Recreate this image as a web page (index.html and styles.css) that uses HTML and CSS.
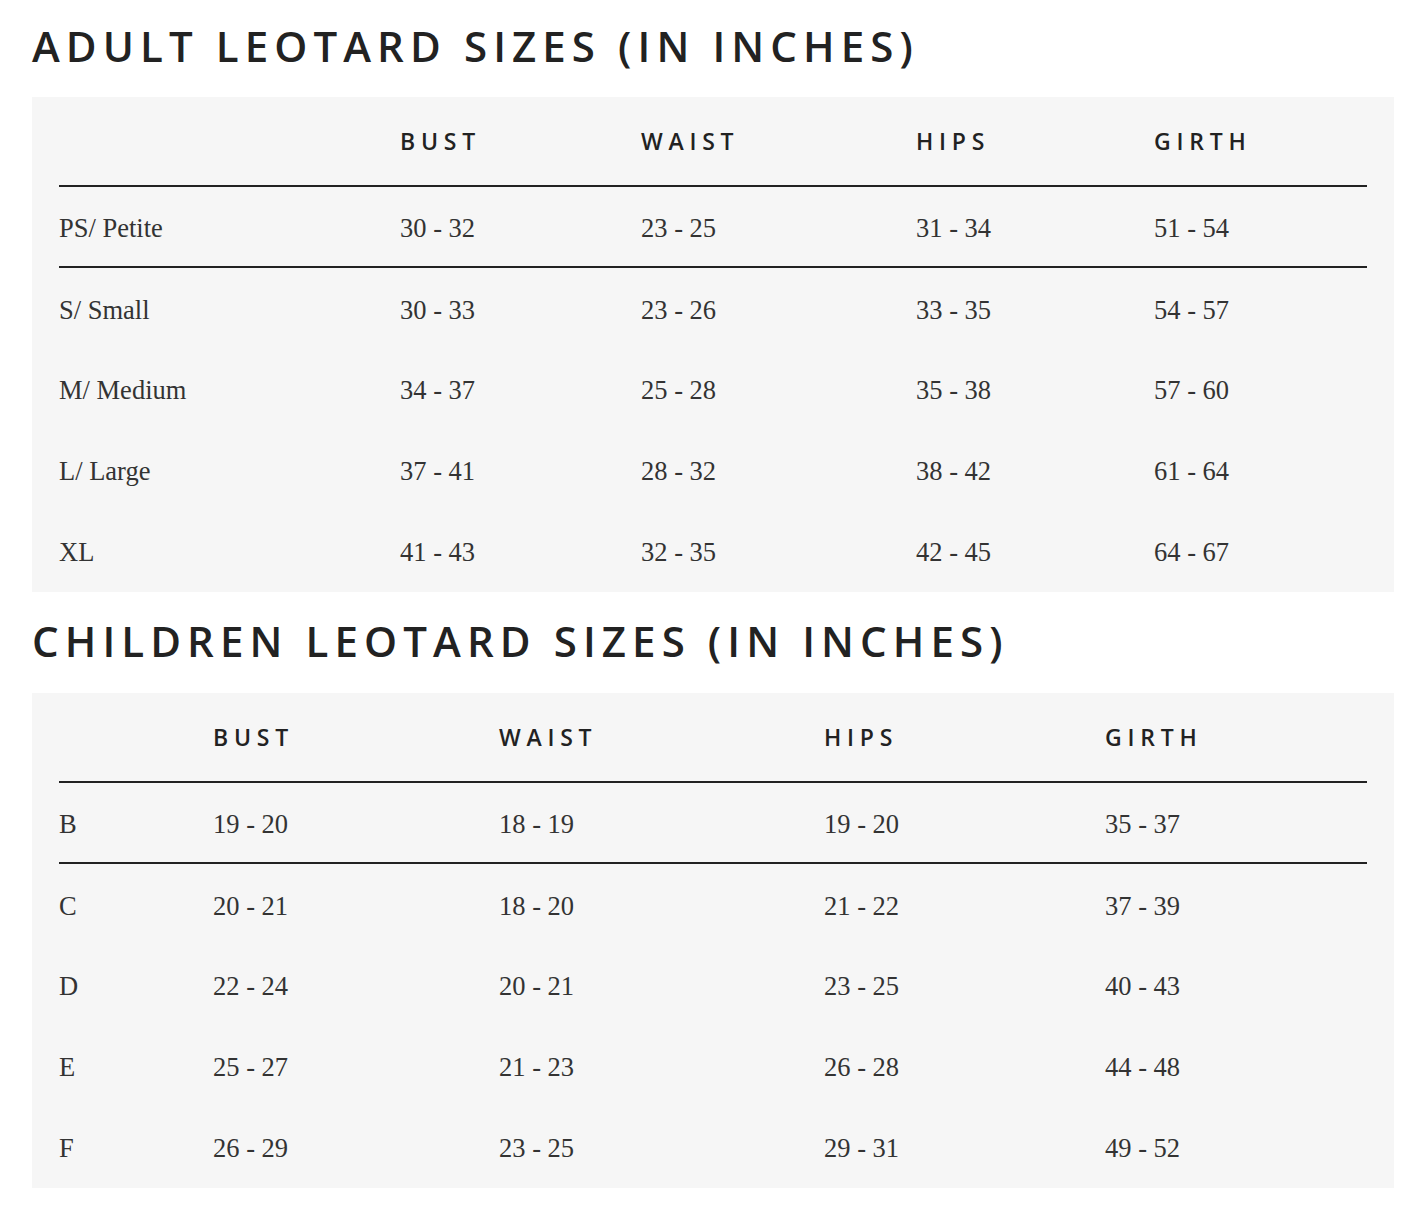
FILE: index.html
```html
<!DOCTYPE html>
<html lang="en">
<head>
<meta charset="utf-8">
<title>Leotard Sizes</title>
<link rel="stylesheet" href="styles.css">
</head>
<body>
<main class="page">
  <section class="chart">
    <h2 class="chart-title">Adult Leotard Sizes (in inches)</h2>
    <div class="chart-box">
      <table class="size-table">
        <colgroup>
          <col class="a-c1"><col class="a-c2"><col class="a-c3"><col class="a-c4"><col class="a-c5">
        </colgroup>
        <thead>
          <tr><th></th><th>Bust</th><th>Waist</th><th>Hips</th><th>Girth</th></tr>
        </thead>
        <tbody>
          <tr class="ruled"><td>PS/ Petite</td><td>30 - 32</td><td>23 - 25</td><td>31 - 34</td><td>51 - 54</td></tr>
          <tr><td>S/ Small</td><td>30 - 33</td><td>23 - 26</td><td>33 - 35</td><td>54 - 57</td></tr>
          <tr><td>M/ Medium</td><td>34 - 37</td><td>25 - 28</td><td>35 - 38</td><td>57 - 60</td></tr>
          <tr><td>L/ Large</td><td>37 - 41</td><td>28 - 32</td><td>38 - 42</td><td>61 - 64</td></tr>
          <tr><td>XL</td><td>41 - 43</td><td>32 - 35</td><td>42 - 45</td><td>64 - 67</td></tr>
        </tbody>
      </table>
    </div>
  </section>
  <section class="chart">
    <h2 class="chart-title">Children Leotard Sizes (in inches)</h2>
    <div class="chart-box">
      <table class="size-table">
        <colgroup>
          <col class="c-c1"><col class="c-c2"><col class="c-c3"><col class="c-c4"><col class="c-c5">
        </colgroup>
        <thead>
          <tr><th></th><th>Bust</th><th>Waist</th><th>Hips</th><th>Girth</th></tr>
        </thead>
        <tbody>
          <tr class="ruled"><td>B</td><td>19 - 20</td><td>18 - 19</td><td>19 - 20</td><td>35 - 37</td></tr>
          <tr><td>C</td><td>20 - 21</td><td>18 - 20</td><td>21 - 22</td><td>37 - 39</td></tr>
          <tr><td>D</td><td>22 - 24</td><td>20 - 21</td><td>23 - 25</td><td>40 - 43</td></tr>
          <tr><td>E</td><td>25 - 27</td><td>21 - 23</td><td>26 - 28</td><td>44 - 48</td></tr>
          <tr><td>F</td><td>26 - 29</td><td>23 - 25</td><td>29 - 31</td><td>49 - 52</td></tr>
        </tbody>
      </table>
    </div>
  </section>
</main>
</body>
</html>
```

FILE: styles.css
```css
* { box-sizing: border-box; }

html, body {
  margin: 0;
  padding: 0;
  background: #ffffff;
}

.page {
  padding: 0 33px 0 32px;
  color: #222222;
}

.chart-title {
  margin: 0;
  padding: 20px 0 0 0;
  height: 97px;
  font-family: "Open Sans", "DejaVu Sans", sans-serif;
  font-weight: 600;
  font-size: 42px;
  line-height: 52px;
  letter-spacing: 6.1px;
  text-transform: uppercase;
  color: #222222;
  white-space: nowrap;
}

.chart + .chart .chart-title {
  padding-top: 23px;
  height: 101px;
}

.chart-box {
  background: #f6f6f6;
  padding: 0 27px 1px;
}

.size-table {
  width: 100%;
  table-layout: fixed;
  border-collapse: collapse;
}

.a-c1 { width: 341px; }
.a-c2 { width: 241px; }
.a-c3 { width: 275px; }
.a-c4 { width: 238px; }
.a-c5 { width: auto; }

.c-c1 { width: 154px; }
.c-c2 { width: 286px; }
.c-c3 { width: 325px; }
.c-c4 { width: 281px; }
.c-c5 { width: auto; }

.size-table th {
  height: 89px;
  padding: 0;
  text-align: left;
  vertical-align: middle;
  font-family: "Open Sans", "DejaVu Sans", sans-serif;
  font-weight: 600;
  font-size: 23px;
  letter-spacing: 0.25em;
  text-transform: uppercase;
  color: #222222;
  border-bottom: 2px solid #222222;
}

.size-table td {
  height: 81px;
  padding: 4px 0 0 0;
  text-align: left;
  vertical-align: middle;
  font-family: "Liberation Serif", "Times New Roman", serif;
  font-size: 26.5px;
  color: #333333;
}

.size-table tr.ruled td {
  border-bottom: 2px solid #222222;
}
```
